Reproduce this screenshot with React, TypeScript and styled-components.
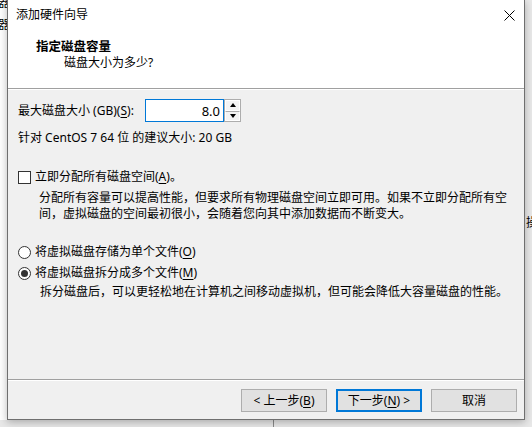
import React from "react";
import styled, { createGlobalStyle } from "styled-components";

const Global = createGlobalStyle`
  html, body { margin: 0; padding: 0; background: #f0f0f0; }
  * { box-sizing: border-box; }
`;

const FONT = `"Noto Sans", "Noto Sans CJK SC", "Microsoft YaHei", sans-serif`;
const CJK = `"Noto Sans CJK SC", "Microsoft YaHei", sans-serif`;

const Page = styled.div`
  width: 532px;
  height: 427px;
  display: grid;
  grid-template-columns: 7px 518px 7px;
  grid-template-rows: 420px 7px;
  background: #f0f0f0;
  overflow: hidden;
  font-family: ${FONT};
  font-size: 12px;
  color: #000;
`;

const LeftStrip = styled.div`
  grid-column: 1;
  grid-row: 1;
  background: #fff;
  overflow: hidden;
  display: flex;
  flex-direction: column;
  align-items: flex-end;
  font-family: ${CJK};
`;

const StripGlyph = styled.span<{ $top: number }>`
  display: block;
  line-height: 12px;
  margin-top: ${(p) => p.$top}px;
  margin-right: -3px;
  font-size: 12px;
`;

const RightStrip = styled.div`
  grid-column: 3;
  grid-row: 1;
  background: #e9e9e9;
  overflow: hidden;
  padding-top: 216px;
  font-family: ${CJK};
`;

const RightGlyph = styled.span`
  display: block;
  line-height: 12px;
  margin-left: 1px;
  white-space: nowrap;
`;

const BottomStrip = styled.div`
  grid-column: 1 / 4;
  grid-row: 2;
  background: #e8e8e8;
  display: flex;
`;

const BottomPane = styled.div`
  width: 274px;
  border-right: 1px solid #8a8a8a;
`;

const Dialog = styled.div`
  grid-column: 2;
  grid-row: 1;
  position: relative;
  z-index: 1;
  display: flex;
  flex-direction: column;
  background: #f0f0f0;
  border: 1px solid #6f6f6f;
  border-top: none;
  box-shadow: 0 2px 8px rgba(0, 0, 0, 0.28);
`;

const Header = styled.div`
  height: 89px;
  background: #fff;
  border-bottom: 1px solid #a0a0a0;
  display: flex;
  flex-direction: column;
`;

const TitleBar = styled.div`
  height: 30px;
  display: flex;
  align-items: center;
  justify-content: space-between;
  padding: 0 9px 0 8px;
`;

const TitleText = styled.span`
  line-height: 16px;
  color: #000;
`;

const CloseIcon = styled.svg`
  width: 11px;
  height: 11px;
  display: block;
`;

const HeaderTitle = styled.div`
  margin-top: 9px;
  padding-left: 28px;
  font-weight: bold;
  font-size: 12.5px;
  line-height: 16px;
`;

const HeaderSub = styled.div`
  padding-left: 56px;
  line-height: 16px;
`;

const Body = styled.div`
  flex: 1;
  display: flex;
  flex-direction: column;
  padding: 10px 10px 0;
  box-shadow: inset 0 1px 0 #fff;
`;

const SizeRow = styled.div`
  display: flex;
  align-items: center;
  height: 23px;
`;

const SizeLabel = styled.span`
  width: 127px;
  line-height: 16px;
  white-space: nowrap;
`;

const NumberInput = styled.div`
  width: 79px;
  height: 23px;
  border: 1px solid #0078d7;
  background: #fff;
  display: flex;
  align-items: center;
  justify-content: flex-end;
  padding-right: 3px;
  font-size: 13px;
`;

const Spinner = styled.div`
  width: 17px;
  height: 23px;
  border: 1px solid #adadad;
  display: flex;
  flex-direction: column;
  background: #fff;
`;

const SpinHalf = styled.div<{ $down?: boolean }>`
  flex: 1;
  display: flex;
  align-items: center;
  justify-content: center;
  background: #f4f4f4;
  border: 1px solid #fff;
  ${(p) => (p.$down ? "border-top: 1px solid #adadad;" : "")}
`;

const Arrow = styled.span<{ $down?: boolean }>`
  width: 0;
  height: 0;
  border-left: 3.5px solid transparent;
  border-right: 3.5px solid transparent;
  ${(p) =>
    p.$down ? "border-top: 4px solid #000;" : "border-bottom: 4px solid #000;"}
`;

const Line = styled.div<{ $mt?: number; $indent?: number }>`
  line-height: 16px;
  margin-top: ${(p) => p.$mt ?? 0}px;
  padding-left: ${(p) => p.$indent ?? 0}px;
  white-space: nowrap;
`;

const OptionRow = styled.label<{ $mt: number }>`
  display: flex;
  align-items: center;
  height: 16px;
  margin-top: ${(p) => p.$mt}px;
  gap: 4px;
  line-height: 16px;
`;

const CheckBox = styled.span`
  width: 13px;
  height: 13px;
  border: 1px solid #333;
  background: #fff;
  display: block;
`;

const Radio = styled.span<{ $checked?: boolean }>`
  width: 13px;
  height: 13px;
  border: 1px solid #333;
  border-radius: 50%;
  background: #fff;
  display: flex;
  align-items: center;
  justify-content: center;
  &::after {
    content: "";
    width: 7px;
    height: 7px;
    border-radius: 50%;
    background: ${(p) => (p.$checked ? "#333" : "transparent")};
  }
`;

const U = styled.span`
  text-decoration: underline;
  text-underline-offset: 2px;
`;

const Footer = styled.div`
  border-top: 1px solid #a0a0a0;
  box-shadow: inset 0 1px 0 #fff;
  padding: 9px 7px 7px;
  display: flex;
  justify-content: flex-end;
  gap: 9px;
`;

const Button = styled.div<{ $default?: boolean }>`
  width: 86px;
  height: 23px;
  display: flex;
  align-items: center;
  justify-content: center;
  background: #e1e1e1;
  border: ${(p) => (p.$default ? "2px solid #0078d7" : "1px solid #adadad")};
  line-height: 16px;
  white-space: pre;
`;

export default function App() {
  return (
    <>
      <Global />
      <Page>
        <LeftStrip>
          <StripGlyph $top={-4}>器</StripGlyph>
          <StripGlyph $top={10}>器</StripGlyph>
        </LeftStrip>
        <Dialog>
          <Header>
            <TitleBar>
              <TitleText>添加硬件向导</TitleText>
              <CloseIcon viewBox="0 0 11 11">
                <path d="M0.5 0.5 L10.5 10.5 M10.5 0.5 L0.5 10.5" stroke="#000" strokeWidth="1" fill="none" />
              </CloseIcon>
            </TitleBar>
            <HeaderTitle>指定磁盘容量</HeaderTitle>
            <HeaderSub>磁盘大小为多少?</HeaderSub>
          </Header>
          <Body>
            <SizeRow>
              <SizeLabel>
                最大磁盘大小 (GB)(<U>S</U>):
              </SizeLabel>
              <NumberInput>8.0</NumberInput>
              <Spinner>
                <SpinHalf>
                  <Arrow />
                </SpinHalf>
                <SpinHalf $down>
                  <Arrow $down />
                </SpinHalf>
              </Spinner>
            </SizeRow>
            <Line $mt={8}>针对 CentOS 7 64 位 的建议大小: 20 GB</Line>
            <OptionRow $mt={23}>
              <CheckBox />
              <span>
                立即分配所有磁盘空间(<U>A</U>)。
              </span>
            </OptionRow>
            <Line $mt={5} $indent={21}>
              分配所有容量可以提高性能，但要求所有物理磁盘空间立即可用。如果不立即分配所有空
            </Line>
            <Line $indent={21}>间，虚拟磁盘的空间最初很小，会随着您向其中添加数据而不断变大。</Line>
            <OptionRow $mt={22}>
              <Radio />
              <span>
                将虚拟磁盘存储为单个文件(<U>O</U>)
              </span>
            </OptionRow>
            <OptionRow $mt={5}>
              <Radio $checked />
              <span>
                将虚拟磁盘拆分成多个文件(<U>M</U>)
              </span>
            </OptionRow>
            <Line $mt={3} $indent={22}>
              拆分磁盘后，可以更轻松地在计算机之间移动虚拟机，但可能会降低大容量磁盘的性能。
            </Line>
          </Body>
          <Footer>
            <Button>
              {"< 上一步("}
              <U>B</U>
              {")"}
            </Button>
            <Button $default>
              {"下一步("}
              <U>N</U>
              {") >"}
            </Button>
            <Button>取消</Button>
          </Footer>
        </Dialog>
        <RightStrip>
          <RightGlyph>操</RightGlyph>
        </RightStrip>
        <BottomStrip>
          <BottomPane />
        </BottomStrip>
      </Page>
    </>
  );
}
